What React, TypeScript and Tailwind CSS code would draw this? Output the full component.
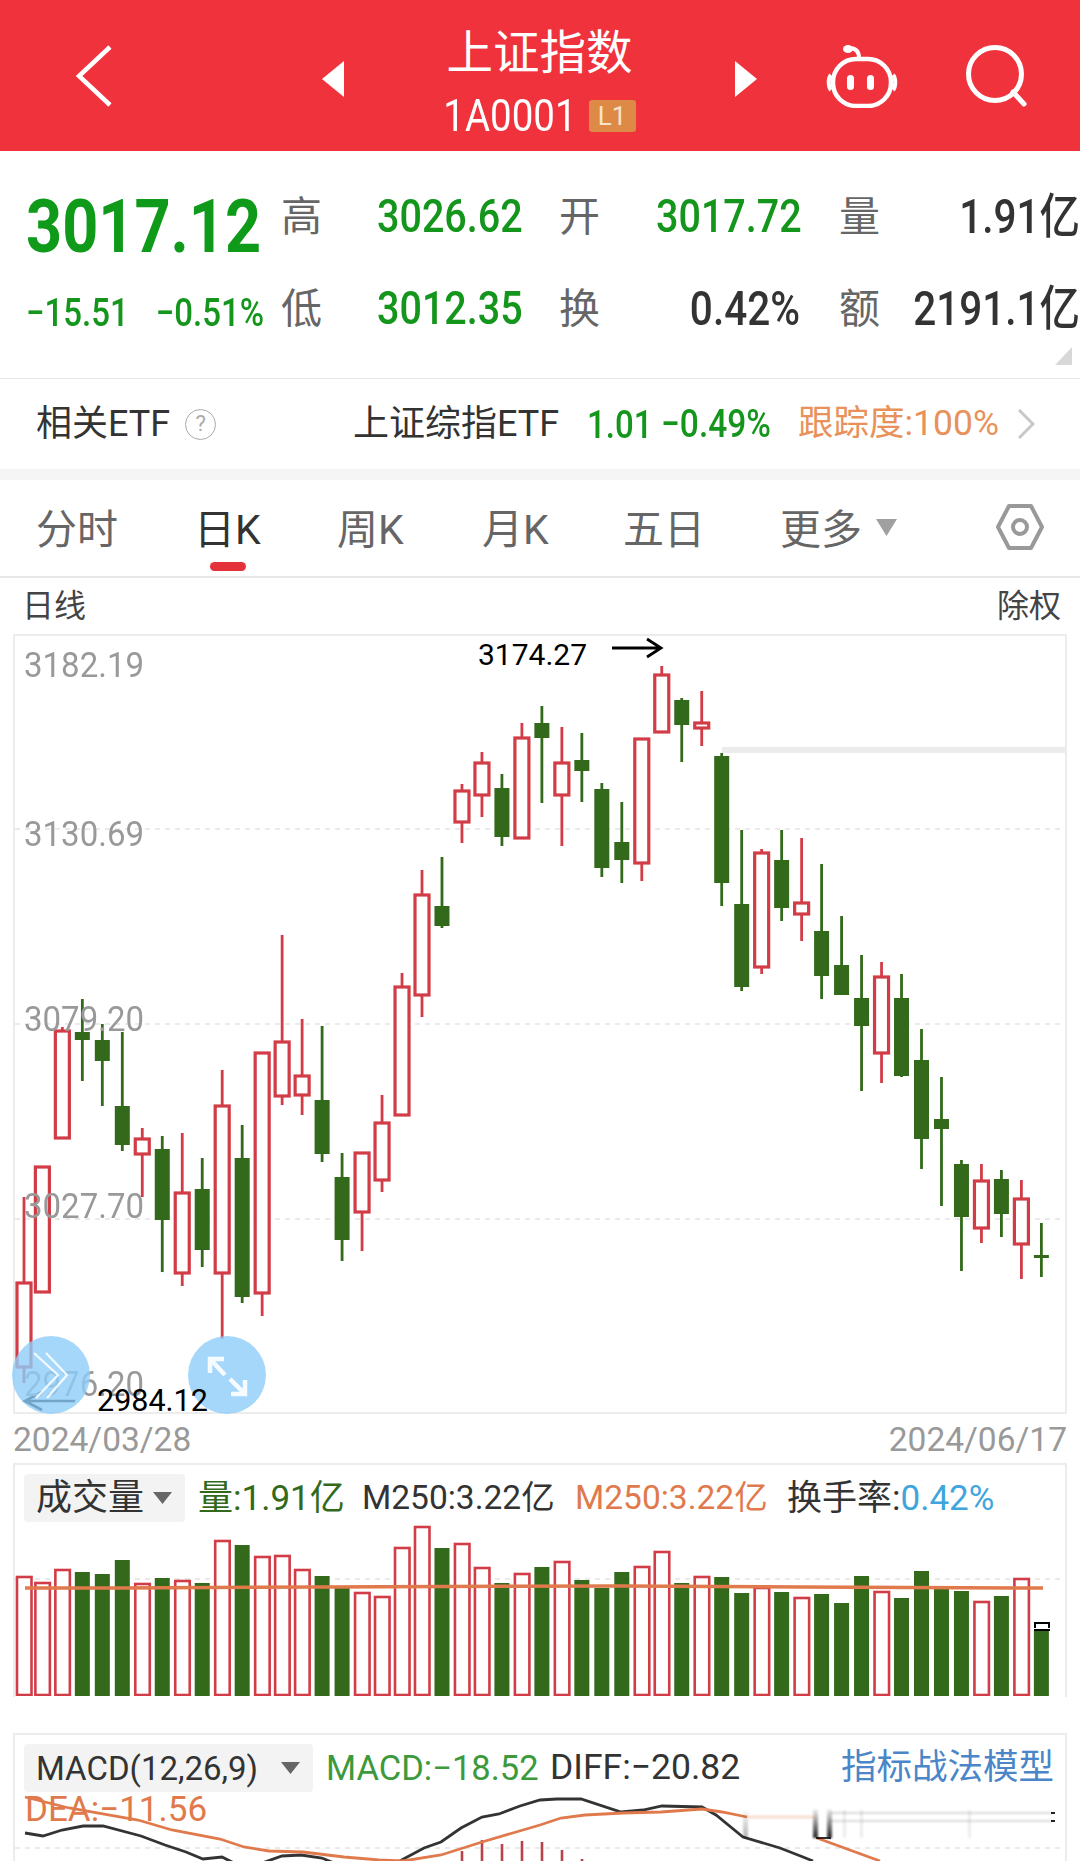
import React from 'react';

type Candle = ['r' | 'g', number, number, number, number];

const CANDLES: Candle[] = [
  ['r', 1197, 1283, 1367, 1383],
  ['r', 1167, 1167, 1292, 1292],
  ['r', 1027, 1031, 1138, 1138],
  ['g', 999, 1032, 1040, 1081],
  ['g', 1024, 1040, 1061, 1106],
  ['g', 1032, 1106, 1145, 1151],
  ['r', 1128, 1139, 1154, 1197],
  ['g', 1136, 1149, 1220, 1272],
  ['r', 1133, 1193, 1273, 1286],
  ['g', 1158, 1189, 1250, 1267],
  ['r', 1070, 1106, 1273, 1339],
  ['g', 1125, 1158, 1297, 1303],
  ['r', 1053, 1053, 1293, 1316],
  ['r', 935, 1042, 1096, 1105],
  ['r', 1019, 1076, 1095, 1115],
  ['g', 1026, 1100, 1154, 1162],
  ['g', 1153, 1177, 1240, 1261],
  ['r', 1152, 1153, 1212, 1251],
  ['r', 1095, 1123, 1180, 1192],
  ['r', 973, 987, 1115, 1115],
  ['r', 870, 895, 995, 1017],
  ['g', 857, 906, 926, 928],
  ['r', 784, 791, 822, 843],
  ['r', 752, 763, 795, 817],
  ['g', 774, 788, 837, 846],
  ['r', 723, 738, 838, 838],
  ['g', 706, 723, 738, 803],
  ['r', 727, 763, 795, 846],
  ['g', 733, 760, 771, 802],
  ['g', 783, 789, 868, 877],
  ['g', 802, 842, 860, 883],
  ['r', 739, 739, 863, 881],
  ['r', 666, 675, 732, 732],
  ['g', 698, 700, 725, 762],
  ['r', 691, 723, 728, 746],
  ['g', 753, 756, 883, 906],
  ['g', 830, 904, 987, 991],
  ['r', 849, 853, 967, 974],
  ['g', 830, 860, 908, 921],
  ['r', 838, 903, 914, 941],
  ['g', 864, 931, 976, 999],
  ['g', 916, 965, 995, 995],
  ['g', 955, 998, 1026, 1091],
  ['r', 962, 977, 1053, 1083],
  ['g', 974, 998, 1076, 1077],
  ['g', 1029, 1060, 1139, 1169],
  ['g', 1077, 1119, 1129, 1206],
  ['g', 1160, 1164, 1217, 1271],
  ['r', 1164, 1181, 1228, 1243],
  ['g', 1170, 1179, 1214, 1237],
  ['r', 1180, 1199, 1244, 1279],
  ['g', 1223, 1255, 1258, 1277],
];

const VOLUME_TOPS = [
  1577, 1583, 1570, 1572, 1574, 1560, 1584, 1578, 1581, 1583, 1541, 1545, 1557,
  1556, 1570, 1576, 1587, 1593, 1597, 1548, 1527, 1548, 1544, 1568, 1583, 1574,
  1567, 1562, 1580, 1588, 1572, 1567, 1552, 1583, 1577, 1577, 1593, 1588, 1592,
  1598, 1594, 1603, 1576, 1592, 1598, 1571, 1588, 1591, 1602, 1596, 1579, 1631,
];

const RED = '#d23c46';
const GREEN = '#32691a';
const ORANGE = '#e07a4c';

// first bar sits a little to the right of the regular spacing
const candleX = (i: number) => (i === 0 ? 24 : 22.4 + i * 19.98);

const Triangle = ({ right }: { right?: boolean }) => (
  <svg width="22" height="36" viewBox="0 0 22 36" className="mt-[7px] shrink-0">
    <polygon points={right ? '0,0 22,18 0,36' : '22,0 0,18 22,36'} fill="#fff" />
  </svg>
);

const Caret = () => (
  <svg width="19" height="12" viewBox="0 0 19 12" className="shrink-0">
    <polygon points="0,0 19,0 9.5,12" fill="#666" />
  </svg>
);

const Num = ({ children, className }: { children: React.ReactNode; className?: string }) => (
  <span className={`inline-block scale-y-[1.17] ${className ?? ''}`}>{children}</span>
);

const Header = () => (
  <div className="flex h-[151px] items-center bg-[#f0323c] text-white">
    <svg width="36" height="62" viewBox="0 0 36 62" className="ml-[76px] shrink-0">
      <polyline points="34,2 3,31 34,60" fill="none" stroke="#fff" strokeWidth="4.5" />
    </svg>
    <div className="ml-[210px] flex">
      <Triangle />
    </div>
    <div className="flex h-full w-[391px] flex-col items-center pt-[24px]">
      <div className="text-[46.5px] leading-[58px]">上证指数</div>
      <div className="flex h-[68px] items-center">
        <Num className="text-[38.5px] leading-none">1A0001</Num>
        <span className="ml-[12px] flex h-[32px] w-[47px] items-center justify-center rounded-[3px] bg-[#dc8a45] text-[26px] text-[#f8e3c9]">
          L1
        </span>
      </div>
    </div>
    <Triangle right />
    {/* robot */}
    <svg width="72" height="64" viewBox="0 0 72 64" className="ml-[69px] shrink-0">
      <path d="M23 4c6 0 10 3 10 10" fill="none" stroke="#fff" strokeWidth="4" strokeLinecap="round" />
      <ellipse cx="22" cy="5" rx="5" ry="4" fill="#fff" />
      <rect x="7" y="15" width="58" height="47" rx="23" fill="none" stroke="#fff" strokeWidth="4.5" />
      <path d="M5 31c-3 3-3 12 0 15M67 31c3 3 3 12 0 15" fill="none" stroke="#fff" strokeWidth="4" />
      <rect x="21" y="31" width="7" height="15" rx="3.5" fill="#fff" />
      <rect x="41" y="31" width="7" height="15" rx="3.5" fill="#fff" />
    </svg>
    {/* search */}
    <svg width="62" height="62" viewBox="0 0 62 62" className="ml-[68px] shrink-0">
      <circle cx="29" cy="29" r="26.5" fill="none" stroke="#fff" strokeWidth="5" />
      <line x1="47" y1="47" x2="58" y2="59" stroke="#fff" strokeWidth="5" strokeLinecap="round" />
    </svg>
  </div>
);

const Stats = () => {
  const label = 'text-[41px] leading-[66px] text-[#666]';
  const green = 'text-[39.5px] leading-[66px] font-medium text-[#14951c]';
  const dark = 'text-[40.5px] leading-[66px] font-medium text-[#333]';
  return (
    <div className="relative h-[227px]">
      <div className="grid grid-cols-[281px_96px_182px_97px_183px_1fr] grid-rows-[66px_66px] gap-y-[26px] pt-[33px]">
        <div className="pl-[26px] pt-[10px]">
          <Num className="text-[63px] leading-[66px] font-bold text-[#0f9a1a]">3017.12</Num>
        </div>
        <div className={label}>高</div>
        <div><Num className={green}>3026.62</Num></div>
        <div className={label}>开</div>
        <div><Num className={green}>3017.72</Num></div>
        <div className="flex justify-between">
          <span className={label}>量</span>
          <Num className={dark}>1.91亿</Num>
        </div>

        <div className="whitespace-nowrap pl-[26px] pt-[4px] font-medium text-[#14951c]">
          <Num className="text-[33px] leading-[66px]">−15.51</Num>
          <Num className="ml-[27px] text-[33px] leading-[66px]">−0.51%</Num>
        </div>
        <div className={label}>低</div>
        <div><Num className={green}>3012.35</Num></div>
        <div className={label}>换</div>
        <div className="pr-[39px] text-right"><Num className={dark}>0.42%</Num></div>
        <div className="flex justify-between">
          <span className={label}>额</span>
          <Num className={dark}>2191.1亿</Num>
        </div>
      </div>
      <svg width="17" height="18" viewBox="0 0 17 18" className="absolute right-[8px] bottom-[13px]">
        <polygon points="17,0 17,18 0,18" fill="#d8d8d8" />
      </svg>
    </div>
  );
};

const EtfRow = () => (
  <div className="flex h-[91px] items-center border-t border-[#e6e6e6] pl-[36px] text-[36px] leading-none">
    <div className="flex w-[317px] items-center text-[#333]">
      <span>相关ETF</span>
      <span className="ml-[15px] flex size-[31px] items-center justify-center rounded-full border border-[#aaa] text-[22px] text-[#aaa]">
        ?
      </span>
    </div>
    <span className="w-[234px] whitespace-nowrap text-[#333]">上证综指ETF</span>
    <Num className="w-[74px] text-[33px] font-medium text-[#14951c]">1.01</Num>
    <Num className="w-[137px] text-[33.5px] font-medium text-[#14951c]">−0.49%</Num>
    <span className="w-[219px] whitespace-nowrap text-[35.5px] text-[#e8915a]">跟踪度:100%</span>
    <svg width="18" height="30" viewBox="0 0 18 30" className="shrink-0">
      <polyline points="2,1 16,15 2,29" fill="none" stroke="#c8c8c8" strokeWidth="3" />
    </svg>
  </div>
);

const TABS = [
  { name: '分时', w: 'w-[158px]' },
  { name: '日K', w: 'w-[143px]', active: true },
  { name: '周K', w: 'w-[145px]' },
  { name: '月K', w: 'w-[141px]' },
  { name: '五日', w: 'w-[157px]' },
];

const Tabs = () => (
  <div className="flex h-[98px] items-center border-b-2 border-[#e8e8e8] pl-[36px] pt-[4px] text-[41px] leading-none text-[#666]">
    {TABS.map((tab) => (
      <div key={tab.name} className={`relative shrink-0 ${tab.w} ${tab.active ? 'text-[#333]' : ''}`}>
        {tab.name}
        {tab.active && (
          <span className="absolute top-[52px] left-[16px] h-[9px] w-[36px] rounded-full bg-[#e3323a]" />
        )}
      </div>
    ))}
    <span className="w-[96px] shrink-0">更多</span>
    <svg width="21" height="17" viewBox="0 0 21 17" className="mb-[6px] shrink-0">
      <polygon points="0,0 21,0 10.5,17" fill="#a0a0a0" />
    </svg>
    <svg width="48" height="46" viewBox="0 0 48 46" className="mb-[6px] ml-[99px] shrink-0">
      <polygon points="13,2 35,2 46,23 35,44 13,44 2,23" fill="none" stroke="#999" strokeWidth="4" strokeLinejoin="round" />
      <circle cx="24" cy="23" r="7" fill="none" stroke="#999" strokeWidth="4" />
    </svg>
  </div>
);

const CandleChart = () => (
  <svg viewBox="15 636 1050 776" className="absolute inset-0 size-full">
    {[829, 1024, 1219].map((y) => (
      <line key={y} x1="15" x2="1065" y1={y} y2={y} stroke="#e4e4e4" strokeWidth="1.5" strokeDasharray="5 5" />
    ))}
    <rect x="722" y="747" width="343" height="6" fill="#ececec" />
    {CANDLES.map(([kind, wickTop, top, bottom, wickBottom], i) => {
      const x = candleX(i);
      const color = kind === 'r' ? RED : GREEN;
      return (
        <g key={i}>
          <line x1={x} x2={x} y1={wickTop} y2={top} stroke={color} strokeWidth="2.8" />
          <line x1={x} x2={x} y1={bottom} y2={wickBottom} stroke={color} strokeWidth="2.8" />
          {kind === 'r' ? (
            <rect x={x - 7} y={top} width="14" height={bottom - top} fill="#fff" stroke={color} strokeWidth="3.2" />
          ) : (
            <rect x={x - 7.5} y={top} width="15" height={Math.max(bottom - top, 2.5)} fill={color} />
          )}
        </g>
      );
    })}
    {/* high / low markers */}
    <path d="M612 648H660M647 639L661 648L647 657" fill="none" stroke="#000" strokeWidth="2.8" />
    <path d="M75 1401H26M42 1392L25 1401L42 1410" fill="none" stroke="#000" strokeWidth="2.6" />
  </svg>
);

const AXIS_LABELS = [
  { text: '3182.19', top: 'top-[14px]' },
  { text: '3130.69', top: 'top-[183px]' },
  { text: '3079.20', top: 'top-[368px]' },
  { text: '3027.70', top: 'top-[555px]' },
  { text: '2976.20', top: 'top-[733px]' },
];

const ChartPanel = () => (
  <div className="relative mx-[13px] h-[780px] border-2 border-[#ececec]">
    <CandleChart />
    {AXIS_LABELS.map((label) => (
      <span
        key={label.text}
        className={`absolute left-[9px] ${label.top} scale-y-[1.08] text-[33px] leading-[30px] text-[#999]`}
      >
        {label.text}
      </span>
    ))}
    {/* round buttons */}
    <div className="absolute top-[700px] left-[-3px] size-[78px] rounded-full bg-[#8fcdfa]/80">
      <svg viewBox="0 0 78 78" className="size-full">
        <path d="M22 17L46 39L24 62M34 17L55 39L35 62" fill="none" stroke="#fff" strokeOpacity="0.85" strokeWidth="2.2" />
      </svg>
    </div>
    <div className="absolute top-[700px] left-[173px] size-[78px] rounded-full bg-[#8fcdfa]/80">
      <svg viewBox="0 0 78 78" className="size-full">
        <path d="M22 23L37 39M22 37V23H36M57 58L42 43M57 44V58H43" fill="none" stroke="#fff" strokeOpacity="0.9" strokeWidth="4.5" />
      </svg>
    </div>
    <span className="absolute top-[4px] left-[463px] text-[30px] leading-[30px] text-black">3174.27</span>
    <span className="absolute top-[750px] left-[82px] text-[30.5px] leading-[30px] text-black">2984.12</span>
  </div>
);

const VolumeBars = () => (
  <svg viewBox="15 1522 1050 174" className="block h-[174px] w-full">
    <line x1="15" x2="1065" y1="1579" y2="1579" stroke="#e4e4e4" strokeWidth="1.5" strokeDasharray="5 5" />
    {VOLUME_TOPS.map((top, i) => {
      const x = candleX(i);
      return CANDLES[i][0] === 'r' ? (
        <rect key={i} x={x - 7} y={top} width="14.5" height={1695 - top} fill="#fff" stroke={RED} strokeWidth="2.6" />
      ) : (
        <rect key={i} x={x - 7.5} y={top} width="15" height={1696 - top} fill={GREEN} />
      );
    })}
    <path d="M1035 1628V1623H1049V1628M1034 1630H1050" fill="none" stroke="#000" strokeWidth="2" />
    <polyline
      points="25,1588 120,1588 320,1587 620,1586 800,1587 1043,1588"
      fill="none"
      stroke={ORANGE}
      strokeWidth="3.5"
    />
  </svg>
);

const VolumePanel = () => (
  <div className="mx-[13px] h-[234px] border-x-2 border-t-2 border-[#ececec]">
    <div className="mt-[9px] flex h-[48px] items-center whitespace-nowrap pl-[9px] text-[33.5px] leading-none">
      <div className="flex h-full w-[161px] items-center rounded-[4px] bg-[#f3f3f3] pl-[12px] text-[36px] text-[#333]">
        <span className="w-[117px]">成交量</span>
        <Caret />
      </div>
      <span className="ml-[13px] w-[164px] text-[35px] text-[#32691a]">量:1.91亿</span>
      <span className="w-[213px] text-[#333]">M250:3.22亿</span>
      <span className="w-[212px] text-[#e07a4c]">M250:3.22亿</span>
      <span className="text-[35px] text-[#333]">换手率:</span>
      <span className="text-[35px] text-[#3fa5dc]">0.42%</span>
    </div>
    <VolumeBars />
  </div>
);

const MacdLines = () => (
  <svg viewBox="15 1735 1050 126" className="absolute inset-0 size-full">
    <defs>
      <linearGradient id="smudge" x1="0" x2="0" y1="0" y2="1">
        <stop offset="0" stopColor="#000" stopOpacity="0.05" />
        <stop offset="1" stopColor="#000" stopOpacity="0.85" />
      </linearGradient>
      <filter id="soft" x="-5%" y="-20%" width="110%" height="140%">
        <feGaussianBlur stdDeviation="1.2" />
      </filter>
    </defs>
    <line x1="15" x2="1065" y1="1848" y2="1848" stroke="#e4e4e4" strokeWidth="1.5" strokeDasharray="5 5" />
    {[
      [462, 1851],
      [482, 1840],
      [502, 1844],
      [522, 1841],
      [542, 1842],
      [562, 1850],
      [582, 1859],
    ].map(([x, top]) => (
      <line key={x} x1={x} x2={x} y1={top} y2="1861" stroke="#b8424c" strokeWidth="2.6" />
    ))}
    <g fill="none" strokeWidth="2.8" stroke="#333">
      <polyline points="25,1833 43,1836 62,1830 83,1826 103,1826 141,1836 165,1845 186,1852 203,1859 222,1857 234,1863" />
      <polyline points="262,1863 282,1856 301,1855 322,1858 334,1863" />
      <polyline points="396,1863 424,1848 441,1842 461,1828 482,1817 499,1814 520,1806 540,1800 557,1799 581,1799 621,1812 643,1810 662,1806 702,1807 716,1815 743,1837 780,1848 803,1857 813,1861" />
    </g>
    <g fill="none" strokeWidth="2.8" stroke={ORANGE}>
      <polyline points="25,1797 69,1808 138,1820 172,1830 220,1839 244,1847 269,1851 303,1852 344,1857 379,1860 403,1861 441,1855 482,1842 540,1825 561,1818 585,1815 623,1813 661,1812 702,1809 722,1812 747,1817" />
      <polyline points="817,1838 880,1861" />
    </g>
    {/* smudged part of the screenshot */}
    <g filter="url(#soft)">
      <line x1="747" y1="1817" x2="815" y2="1817" stroke={ORANGE} strokeOpacity="0.25" strokeWidth="3" />
      <rect x="743" y="1810" width="5" height="28" fill="url(#smudge)" opacity="0.35" />
      <rect x="813" y="1809" width="5" height="29" fill="url(#smudge)" />
      <rect x="827" y="1809" width="5" height="29" fill="url(#smudge)" />
      <rect x="830" y="1812" width="222" height="2" fill="#000" opacity="0.14" />
      <rect x="830" y="1820" width="222" height="2" fill="#000" opacity="0.14" />
      {[843, 860, 968].map((x) => (
        <rect key={x} x={x} y="1810" width="3" height="28" fill="#000" opacity="0.07" />
      ))}
    </g>
    <line x1="816" x2="831" y1="1838" y2="1838" stroke="#000" strokeWidth="1.6" />
    <rect x="1051" y="1812" width="4" height="2" fill="#222" />
    <rect x="1051" y="1820" width="4" height="2" fill="#222" />
  </svg>
);

const MacdPanel = () => (
  <div className="relative mx-[13px] mt-[36px] h-[128px] border-x-2 border-t-2 border-[#ececec]">
    <MacdLines />
    <div className="relative mt-[9px] flex h-[48px] items-center whitespace-nowrap pl-[9px] text-[33px] leading-none">
      <div className="flex h-full w-[289px] items-center rounded-[4px] bg-[#f3f3f3] pl-[12px] text-[#333]">
        <span className="w-[245px]">MACD(12,26,9)</span>
        <Caret />
      </div>
      <span className="ml-[13px] w-[224px] text-[34.5px] text-[#3c9a3c]">MACD:−18.52</span>
      <span className="w-[291px] text-[35.5px] text-[#333]">DIFF:−20.82</span>
      <span className="text-[35.5px] text-[#4a86c8]">指标战法模型</span>
    </div>
    <div className="pl-[10px] text-[35px] leading-[36px] text-[#e07a4c]">DEA:−11.56</div>
  </div>
);

export default function App() {
  return (
    <div className="h-[1861px] w-[1080px] overflow-hidden bg-white font-['Roboto','Noto_Sans_CJK_SC',sans-serif]">
      <Header />
      <Stats />
      <EtfRow />
      <div className="h-[11px] bg-[#f5f5f5]" />
      <Tabs />
      <div className="flex h-[56px] items-center justify-between pr-[19px] pl-[22px] text-[32px] leading-none text-[#444]">
        <span>日线</span>
        <span>除权</span>
      </div>
      <ChartPanel />
      <div className="flex h-[49px] items-center justify-between px-[13px] pt-[2px] text-[33.5px] leading-none text-[#999]">
        <span>2024/03/28</span>
        <span>2024/06/17</span>
      </div>
      <VolumePanel />
      <MacdPanel />
    </div>
  );
}
